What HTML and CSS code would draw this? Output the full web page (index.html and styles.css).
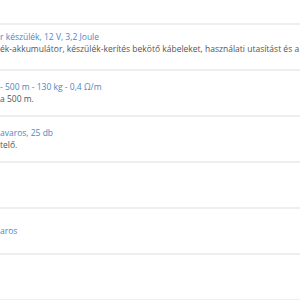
FILE: index.html
```html
<!DOCTYPE html>
<html lang="hu">
<head>
<meta charset="utf-8">
<link rel="stylesheet" href="styles.css">
</head>
<body>
<div class="list">
  <div class="row first">
    <div class="title">r készülék, 12 V, 3,2 Joule</div>
    <div class="desc">ék-akkumulátor, készülék-kerítés bekötő kábeleket, használati utasítást és a</div>
  </div>
  <div class="row">
    <div class="title">- 500 m - 130 kg - 0,4 Ω/m</div>
    <div class="desc">a 500 m.</div>
  </div>
  <div class="row">
    <div class="title">avaros, 25 db</div>
    <div class="desc">telő.</div>
  </div>
  <div class="row"></div>
  <div class="row">
    <div class="title">aros</div>
  </div>
  <div class="row"></div>
  <div class="row"></div>
</div>
</body>
</html>
```
FILE: styles.css
```css
html, body {
  margin: 0;
  padding: 0;
  background: #ffffff;
}
body {
  font-family: "Open Sans", "Liberation Sans", sans-serif;
  font-size: 8.5px;
  line-height: 12px;
  overflow: hidden;
  width: 300px;
  height: 300px;
}
.list {
  padding-top: 23px;
}
.row {
  border-top: 2px solid #eeeeee;
  height: 44px;
  display: flex;
  flex-direction: column;
  justify-content: center;
  white-space: nowrap;
  overflow: hidden;
}
.row.first {
  box-sizing: border-box;
  height: 46px;
  padding-bottom: 8px;
}
.title {
  color: #4f86c4;
}
.desc {
  color: #555555;
}
```
